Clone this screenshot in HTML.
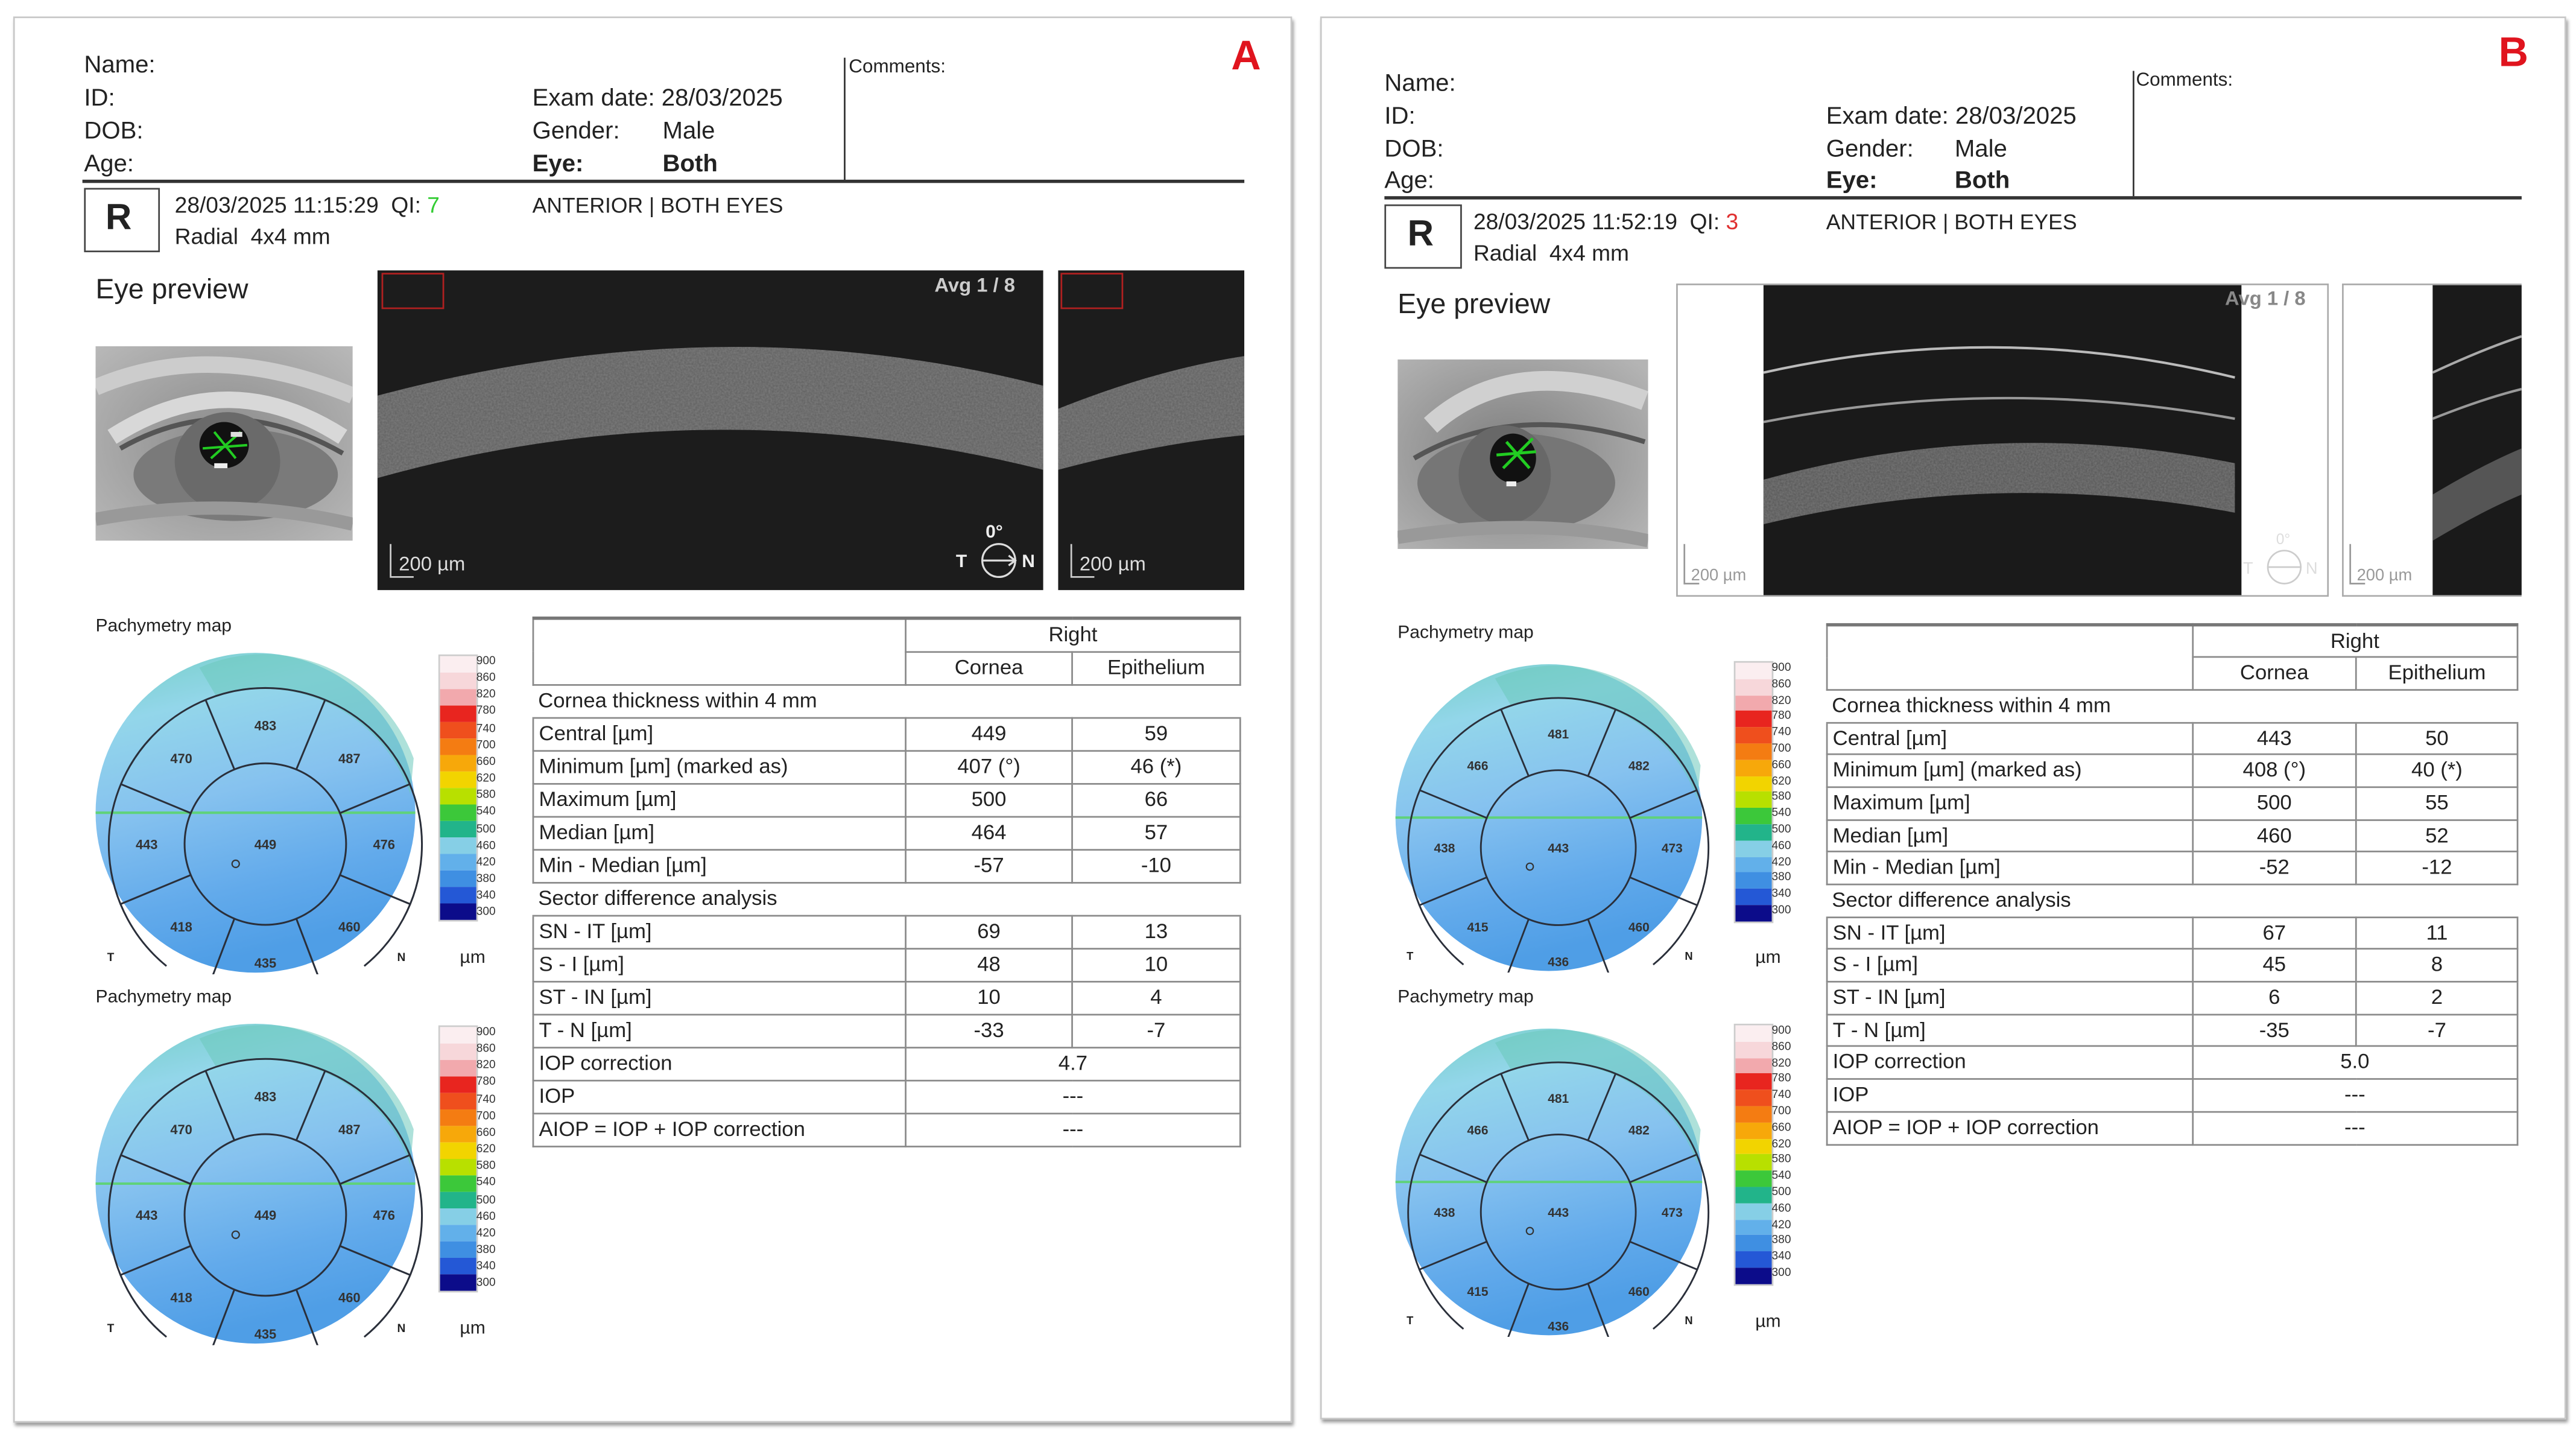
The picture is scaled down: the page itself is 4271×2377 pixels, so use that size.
<!DOCTYPE html>
<html><head><meta charset="utf-8">
<style>
html,body{margin:0;padding:0;background:#fff;}
body{width:4271px;height:2376px;overflow:hidden;position:relative;}
#root{position:absolute;left:0;top:0;width:1563px;height:870px;transform:scale(2.7326);transform-origin:0 0;font-family:"Liberation Sans",sans-serif;color:#222;}
.a{position:absolute;}
.t{position:absolute;white-space:nowrap;line-height:1;}
.h{font-size:14.7px;}
.panel{position:absolute;border:1px solid #c8c8c8;box-shadow:1px 2px 2px #999;background:#fff;}
table.tb{position:absolute;border-collapse:collapse;font-size:12.7px;color:#222;}
table.tb td{border:1px solid #8a8a8a;padding:0 0 0 3px;white-space:nowrap;line-height:1;}
table.tb td.c{text-align:center;padding:0;}
table.tb tr.s td{border-left:none;}
.bar div{height:10px;}
.sc{position:absolute;font-size:7px;line-height:1;color:#333;}
</style></head><body><div id="root">

<!-- PANEL A -->
<div class="panel" style="left:8px;top:10px;width:774px;height:851px;"></div>
<div class="t h" style="left:51px;top:33px;">Name:</div>
<div class="t h" style="left:51px;top:53px;">ID:</div>
<div class="t h" style="left:51px;top:73px;">DOB:</div>
<div class="t h" style="left:51px;top:93px;">Age:</div>
<div class="t h" style="left:323px;top:53px;">Exam date: 28/03/2025</div>
<div class="t h" style="left:323px;top:73px;">Gender:</div><div class="t h" style="left:402px;top:73px;">Male</div>
<div class="t h" style="left:323px;top:93px;font-weight:bold;">Eye:</div><div class="t h" style="left:402px;top:93px;font-weight:bold;">Both</div>
<div class="a" style="left:512px;top:35px;width:1px;height:75px;background:#333;"></div>
<div class="t" style="left:515px;top:36px;font-size:11.5px;">Comments:</div>
<div class="t" style="left:747px;top:22px;font-size:25px;font-weight:bold;color:#e0141e;">A</div>
<div class="a" style="left:50px;top:109px;width:705px;height:2px;background:#333;"></div>
<div class="a" style="left:51px;top:114px;width:44px;height:37px;border:1px solid #444;"></div>
<div class="t" style="left:64px;top:121px;font-size:22px;font-weight:bold;">R</div>
<div class="t" style="left:106px;top:118px;font-size:13.6px;">28/03/2025 11:15:29&nbsp; QI: <span style="color:#3c3">7</span></div>
<div class="t" style="left:106px;top:137px;font-size:13.6px;">Radial&nbsp; 4x4 mm</div>
<div class="t" style="left:323px;top:118px;font-size:13px;">ANTERIOR | BOTH EYES</div>
<div class="t" style="left:58px;top:167px;font-size:17px;">Eye preview</div>

<!-- eye A -->
<svg class="a" style="left:58px;top:210px;" width="156" height="118" viewBox="0 0 156 118">
<defs><radialGradient id="ea" cx="0.5" cy="0.5" r="0.7"><stop offset="0" stop-color="#8a8a8a"/><stop offset="1" stop-color="#b8b8b8"/></radialGradient></defs>
<rect width="156" height="118" fill="url(#ea)"/>
<path d="M0,25 Q70,-5 156,30" stroke="#ccc" stroke-width="10" fill="none"/>
<path d="M10,55 Q80,10 150,55" stroke="#d8d8d8" stroke-width="10" fill="none"/>
<path d="M15,62 Q80,25 150,65" stroke="#555" stroke-width="3" fill="none"/>
<ellipse cx="85" cy="78" rx="62" ry="28" fill="#7a7a7a"/>
<ellipse cx="80" cy="70" rx="32" ry="30" fill="#6a6a6a"/>
<ellipse cx="78" cy="60" rx="15" ry="14" fill="#111"/>
<path d="M65,62 L92,60 M72,52 L85,68 M70,68 L88,52" stroke="#2c2" stroke-width="1.5"/>
<rect x="72" y="71" width="8" height="3" fill="#eee"/><rect x="82" y="52" width="7" height="3" fill="#ddd"/>
<path d="M0,105 Q80,90 156,108" stroke="#999" stroke-width="8" fill="none"/>
</svg>

<!-- OCT A -->
<svg class="a" style="left:229px;top:164px;" width="404" height="194" viewBox="0 0 404 194">
<defs><filter id="nz"><feTurbulence type="fractalNoise" baseFrequency="0.9" numOctaves="2" seed="3"/><feColorMatrix values="0 0 0 0 0.5  0 0 0 0 0.5  0 0 0 0 0.5  0 0 0 0.35 0"/><feComposite in2="SourceGraphic" operator="in"/></filter></defs>
<rect width="404" height="194" fill="#1c1c1c"/>
<path d="M0,76 Q210,20 404,70 L404,121 Q200,70 0,126 Z" fill="#5e5e5e"/>
<path d="M0,76 Q210,20 404,70 L404,121 Q200,70 0,126 Z" fill="#fff" filter="url(#nz)"/>
<rect x="3" y="2" width="37" height="21" fill="none" stroke="#b02020" stroke-width="1"/>
<text x="338" y="13" font-size="12" fill="#ccc" font-family="Liberation Sans" font-weight="bold">Avg 1 / 8</text>
<path d="M8,166 V186 H22" stroke="#ccc" fill="none" stroke-width="1"/>
<text x="13" y="182" font-size="12" fill="#ddd" font-family="Liberation Sans">200 µm</text>
<text x="369" y="162" font-size="11" fill="#eee" font-family="Liberation Sans" font-weight="bold">0°</text>
<circle cx="377" cy="176" r="10" fill="none" stroke="#ddd" stroke-width="1.2"/>
<path d="M367,176 H387 M383,173 L387,176 L383,179" stroke="#ddd" fill="none" stroke-width="1.2"/>
<text x="351" y="180" font-size="11" fill="#eee" font-family="Liberation Sans" font-weight="bold">T</text>
<text x="391" y="180" font-size="11" fill="#eee" font-family="Liberation Sans" font-weight="bold">N</text>
</svg>
<svg class="a" style="left:642px;top:164px;" width="113" height="194" viewBox="0 0 113 194">
<rect width="113" height="194" fill="#1c1c1c"/>
<path d="M0,84 Q60,60 113,52 L113,100 Q60,105 0,121 Z" fill="#5e5e5e"/>
<path d="M0,84 Q60,60 113,52 L113,100 Q60,105 0,121 Z" fill="#fff" filter="url(#nz)"/>
<rect x="2" y="2" width="37" height="21" fill="none" stroke="#b02020" stroke-width="1"/>
<path d="M8,166 V186 H22" stroke="#ccc" fill="none" stroke-width="1"/>
<text x="13" y="182" font-size="12" fill="#ddd" font-family="Liberation Sans">200 µm</text>
</svg>

<!-- Maps A -->
<div class="t" style="left:58px;top:375px;font-size:11px;">Pachymetry map</div>
<div class="t" style="left:58px;top:600px;font-size:11px;">Pachymetry map</div>

<svg class="a" style="left:51px;top:387px;" width="220" height="210" viewBox="-110 -125 220 210">
<defs>
<linearGradient id="mg" x1="0" y1="0" x2="0.25" y2="1"><stop offset="0" stop-color="#74cfc4"/><stop offset="0.22" stop-color="#93d6ea"/><stop offset="0.5" stop-color="#86c2ef"/><stop offset="0.8" stop-color="#62aaeb"/><stop offset="1" stop-color="#4f9ee6"/></linearGradient>
<clipPath id="cl"><rect x="-110" y="-125" width="220" height="204"/></clipPath>
</defs>
<g clip-path="url(#cl)">
<circle cx="-6" cy="-19" r="97" fill="url(#mg)"/>
<path d="M-40,-107 A97 97 0 0 1 90,-52 L88,-30 A95 95 0 0 0 -30,-90 Z" fill="#6cc8bc" opacity="0.55"/>
<line x1="-103" y1="-19" x2="91" y2="-19" stroke="#5fd27a" stroke-width="1.5"/>
<circle r="49" fill="none" stroke="#2a2f3a" stroke-width="1.1"/>
<path d="M-60,74 A95 95 0 1 1 60,74" fill="none" stroke="#2a2f3a" stroke-width="1.1"/>
<g stroke="#2a2f3a" stroke-width="1.1">
<line x1="-18.8" y1="-45.3" x2="-36.4" y2="-87.8"/><line x1="18.8" y1="-45.3" x2="36.4" y2="-87.8"/>
<line x1="-45.3" y1="-18.8" x2="-87.8" y2="-36.4"/><line x1="45.3" y1="-18.8" x2="87.8" y2="-36.4"/>
<line x1="-45.3" y1="18.8" x2="-87.8" y2="36.4"/><line x1="45.3" y1="18.8" x2="87.8" y2="36.4"/>
<line x1="-18.8" y1="45.3" x2="-32" y2="80"/><line x1="18.8" y1="45.3" x2="32" y2="80"/>
</g>
<g font-family="Liberation Sans" font-size="8" font-weight="bold" fill="#333" text-anchor="middle">
<text x="0" y="-69">483</text><text x="-51" y="-49">470</text><text x="51" y="-49">487</text>
<text x="-72" y="3">443</text><text x="0" y="3">449</text><text x="72" y="3">476</text>
<text x="-51" y="53">418</text><text x="0" y="75">435</text><text x="51" y="53">460</text>
</g>
<circle cx="-18" cy="12" r="2.2" fill="none" stroke="#333" stroke-width="0.8"/>
</g>
<text x="-96" y="71" font-family="Liberation Sans" font-size="7" font-weight="bold" fill="#222">T</text>
<text x="80" y="71" font-family="Liberation Sans" font-size="7" font-weight="bold" fill="#222">N</text>
</svg>
<svg class="a" style="left:51px;top:612px;" width="220" height="210" viewBox="-110 -125 220 210">
<g clip-path="url(#cl)">
<circle cx="-6" cy="-19" r="97" fill="url(#mg)"/>
<path d="M-40,-107 A97 97 0 0 1 90,-52 L88,-30 A95 95 0 0 0 -30,-90 Z" fill="#6cc8bc" opacity="0.55"/>
<line x1="-103" y1="-19" x2="91" y2="-19" stroke="#5fd27a" stroke-width="1.5"/>
<circle r="49" fill="none" stroke="#2a2f3a" stroke-width="1.1"/>
<path d="M-60,74 A95 95 0 1 1 60,74" fill="none" stroke="#2a2f3a" stroke-width="1.1"/>
<g stroke="#2a2f3a" stroke-width="1.1">
<line x1="-18.8" y1="-45.3" x2="-36.4" y2="-87.8"/><line x1="18.8" y1="-45.3" x2="36.4" y2="-87.8"/>
<line x1="-45.3" y1="-18.8" x2="-87.8" y2="-36.4"/><line x1="45.3" y1="-18.8" x2="87.8" y2="-36.4"/>
<line x1="-45.3" y1="18.8" x2="-87.8" y2="36.4"/><line x1="45.3" y1="18.8" x2="87.8" y2="36.4"/>
<line x1="-18.8" y1="45.3" x2="-32" y2="80"/><line x1="18.8" y1="45.3" x2="32" y2="80"/>
</g>
<g font-family="Liberation Sans" font-size="8" font-weight="bold" fill="#333" text-anchor="middle">
<text x="0" y="-69">483</text><text x="-51" y="-49">470</text><text x="51" y="-49">487</text>
<text x="-72" y="3">443</text><text x="0" y="3">449</text><text x="72" y="3">476</text>
<text x="-51" y="53">418</text><text x="0" y="75">435</text><text x="51" y="53">460</text>
</g>
<circle cx="-18" cy="12" r="2.2" fill="none" stroke="#333" stroke-width="0.8"/>
</g>
<text x="-96" y="71" font-family="Liberation Sans" font-size="7" font-weight="bold" fill="#222">T</text>
<text x="80" y="71" font-family="Liberation Sans" font-size="7" font-weight="bold" fill="#222">N</text>
</svg>

<!-- color bars A -->
<div class="a bar" style="left:266px;top:397px;width:22px;border:1px solid #ccc;">
<div style="background:#fbeef0"></div><div style="background:#f7d7da"></div><div style="background:#f2a9ad"></div><div style="background:#e8251f"></div><div style="background:#ef4f1d"></div><div style="background:#f47c12"></div><div style="background:#f7a80a"></div><div style="background:#f2d400"></div><div style="background:#b8e000"></div><div style="background:#3cc83a"></div><div style="background:#22b48a"></div><div style="background:#86cfe6"></div><div style="background:#62b0ea"></div><div style="background:#3f8fe2"></div><div style="background:#2458d6"></div><div style="background:#0c0c8a"></div>
</div>
<div class="sc" style="left:289px;top:397px;line-height:10.15px;">900<br>860<br>820<br>780<br>740<br>700<br>660<br>620<br>580<br>540<br>500<br>460<br>420<br>380<br>340<br>300</div>
<div class="t" style="left:279px;top:576px;font-size:11px;">µm</div>
<div class="a bar" style="left:266px;top:622px;width:22px;border:1px solid #ccc;">
<div style="background:#fbeef0"></div><div style="background:#f7d7da"></div><div style="background:#f2a9ad"></div><div style="background:#e8251f"></div><div style="background:#ef4f1d"></div><div style="background:#f47c12"></div><div style="background:#f7a80a"></div><div style="background:#f2d400"></div><div style="background:#b8e000"></div><div style="background:#3cc83a"></div><div style="background:#22b48a"></div><div style="background:#86cfe6"></div><div style="background:#62b0ea"></div><div style="background:#3f8fe2"></div><div style="background:#2458d6"></div><div style="background:#0c0c8a"></div>
</div>
<div class="sc" style="left:289px;top:622px;line-height:10.15px;">900<br>860<br>820<br>780<br>740<br>700<br>660<br>620<br>580<br>540<br>500<br>460<br>420<br>380<br>340<br>300</div>
<div class="t" style="left:279px;top:801px;font-size:11px;">µm</div>

<!-- table A -->
<table class="tb" style="left:323px;top:374px;width:430px;border-top:2px solid #777;">
<colgroup><col style="width:226px"><col style="width:101px"><col style="width:102px"></colgroup>
<tr style="height:20px"><td rowspan="2"></td><td class="c" colspan="2">Right</td></tr>
<tr style="height:20px"><td class="c">Cornea</td><td class="c">Epithelium</td></tr>
<tr class="s" style="height:20px"><td colspan="3" style="border-right:none">Cornea thickness within 4 mm</td></tr>
<tr style="height:20px"><td>Central [µm]</td><td class="c">449</td><td class="c">59</td></tr>
<tr style="height:20px"><td>Minimum [µm] (marked as)</td><td class="c">407 (°)</td><td class="c">46 (*)</td></tr>
<tr style="height:20px"><td>Maximum [µm]</td><td class="c">500</td><td class="c">66</td></tr>
<tr style="height:20px"><td>Median [µm]</td><td class="c">464</td><td class="c">57</td></tr>
<tr style="height:20px"><td>Min - Median [µm]</td><td class="c">-57</td><td class="c">-10</td></tr>
<tr class="s" style="height:20px"><td colspan="3" style="border-right:none">Sector difference analysis</td></tr>
<tr style="height:20px"><td>SN - IT [µm]</td><td class="c">69</td><td class="c">13</td></tr>
<tr style="height:20px"><td>S - I [µm]</td><td class="c">48</td><td class="c">10</td></tr>
<tr style="height:20px"><td>ST - IN [µm]</td><td class="c">10</td><td class="c">4</td></tr>
<tr style="height:20px"><td>T - N [µm]</td><td class="c">-33</td><td class="c">-7</td></tr>
<tr style="height:20px"><td>IOP correction</td><td class="c" colspan="2">4.7</td></tr>
<tr style="height:20px"><td>IOP</td><td class="c" colspan="2">---</td></tr>
<tr style="height:20px"><td>AIOP = IOP + IOP correction</td><td class="c" colspan="2">---</td></tr>
</table>

<!-- PANEL B -->
<div class="panel" style="left:801px;top:10px;width:754px;height:849px;"></div>
<div class="t h" style="left:840px;top:44px;">Name:</div>
<div class="t h" style="left:840px;top:64px;">ID:</div>
<div class="t h" style="left:840px;top:84px;">DOB:</div>
<div class="t h" style="left:840px;top:103px;">Age:</div>
<div class="t h" style="left:1108px;top:64px;">Exam date: 28/03/2025</div>
<div class="t h" style="left:1108px;top:84px;">Gender:</div><div class="t h" style="left:1186px;top:84px;">Male</div>
<div class="t h" style="left:1108px;top:103px;font-weight:bold;">Eye:</div><div class="t h" style="left:1186px;top:103px;font-weight:bold;">Both</div>
<div class="a" style="left:1294px;top:43px;width:1px;height:76px;background:#333;"></div>
<div class="t" style="left:1296px;top:44px;font-size:11.5px;">Comments:</div>
<div class="t" style="left:1516px;top:20px;font-size:25px;font-weight:bold;color:#e0141e;">B</div>
<div class="a" style="left:840px;top:119px;width:690px;height:2px;background:#333;"></div>
<div class="a" style="left:840px;top:124px;width:45px;height:37px;border:1px solid #444;"></div>
<div class="t" style="left:854px;top:131px;font-size:22px;font-weight:bold;">R</div>
<div class="t" style="left:894px;top:128px;font-size:13.6px;">28/03/2025 11:52:19&nbsp; QI: <span style="color:#e03030">3</span></div>
<div class="t" style="left:894px;top:147px;font-size:13.6px;">Radial&nbsp; 4x4 mm</div>
<div class="t" style="left:1108px;top:128px;font-size:13px;">ANTERIOR | BOTH EYES</div>
<div class="t" style="left:848px;top:176px;font-size:17px;">Eye preview</div>

<!-- eye B -->
<svg class="a" style="left:848px;top:218px;" width="152" height="115" viewBox="0 0 152 115">
<defs><radialGradient id="eb" cx="0.45" cy="0.5" r="0.7"><stop offset="0" stop-color="#7e7e7e"/><stop offset="1" stop-color="#b4b4b4"/></radialGradient></defs>
<rect width="152" height="115" fill="url(#eb)"/>
<path d="M20,40 Q70,-5 150,25" stroke="#d0d0d0" stroke-width="12" fill="none"/>
<path d="M10,60 Q70,25 150,50" stroke="#555" stroke-width="3" fill="none"/>
<ellipse cx="72" cy="75" rx="60" ry="30" fill="#767676"/>
<ellipse cx="65" cy="70" rx="28" ry="30" fill="#686868"/>
<ellipse cx="70" cy="60" rx="14" ry="15" fill="#111"/>
<path d="M60,58 L84,56 M66,50 L80,66 M64,66 L82,48" stroke="#2c2" stroke-width="1.8"/>
<rect x="66" y="74" width="6" height="3" fill="#eee"/>
<path d="M0,108 Q80,95 152,110" stroke="#999" stroke-width="8" fill="none"/>
</svg>

<!-- OCT B -->
<svg class="a" style="left:1017px;top:172px;" width="396" height="190" viewBox="0 0 396 190">
<rect x="0.5" y="0.5" width="395" height="189" fill="#fff" stroke="#aaa"/>
<rect x="53" y="1" width="290" height="188" fill="#1a1a1a"/>
<path d="M53,54 Q196,22 339,57" stroke="#bbb" stroke-width="1.5" fill="none"/>
<path d="M53,84 Q196,56 339,82" stroke="#999" stroke-width="1.5" fill="none"/>
<path d="M53,119 Q195,80 339,109 L339,139 Q195,112 53,146 Z" fill="#555"/>
<path d="M53,119 Q195,80 339,109 L339,139 Q195,112 53,146 Z" fill="#fff" filter="url(#nz)"/>
<text x="333" y="13" font-size="12" fill="#888" font-family="Liberation Sans" font-weight="bold">Avg 1 / 8</text>
<path d="M5,158 V182 H14" stroke="#999" fill="none"/>
<text x="9" y="180" font-size="10" fill="#999" font-family="Liberation Sans">200 µm</text>
<circle cx="369" cy="172" r="10" fill="none" stroke="#ccc"/>
<path d="M359,172 H379" stroke="#ccc"/>
<text x="364" y="158" font-size="9" fill="#ddd" font-family="Liberation Sans">0°</text>
<text x="344" y="176" font-size="10" fill="#ddd" font-family="Liberation Sans">T</text>
<text x="382" y="176" font-size="10" fill="#ddd" font-family="Liberation Sans">N</text>
</svg>
<svg class="a" style="left:1421px;top:172px;" width="109" height="190" viewBox="0 0 109 190">
<rect x="0.5" y="0.5" width="108" height="189" fill="#fff" stroke="#aaa"/>
<rect x="55" y="1" width="54" height="188" fill="#1a1a1a"/>
<path d="M55,54 Q85,40 109,32" stroke="#aaa" stroke-width="1.5" fill="none"/>
<path d="M55,82 Q85,70 109,64" stroke="#999" stroke-width="1.5" fill="none"/>
<path d="M55,128 Q85,110 109,100 L109,128 Q85,138 55,156 Z" fill="#555"/>
<path d="M5,158 V182 H14" stroke="#999" fill="none"/>
<text x="9" y="180" font-size="10" fill="#999" font-family="Liberation Sans">200 µm</text>
</svg>

<!-- Maps B -->
<div class="t" style="left:848px;top:379px;font-size:11px;">Pachymetry map</div>
<div class="t" style="left:848px;top:600px;font-size:11px;">Pachymetry map</div>
<svg class="a" style="left:840px;top:394px;" width="211" height="202" viewBox="-110 -125 220 210">
<g clip-path="url(#cl)">
<circle cx="-6" cy="-19" r="97" fill="url(#mg)"/>
<path d="M-40,-107 A97 97 0 0 1 90,-52 L88,-30 A95 95 0 0 0 -30,-90 Z" fill="#6cc8bc" opacity="0.55"/>
<line x1="-103" y1="-19" x2="91" y2="-19" stroke="#5fd27a" stroke-width="1.5"/>
<circle r="49" fill="none" stroke="#2a2f3a" stroke-width="1.1"/>
<path d="M-60,74 A95 95 0 1 1 60,74" fill="none" stroke="#2a2f3a" stroke-width="1.1"/>
<g stroke="#2a2f3a" stroke-width="1.1">
<line x1="-18.8" y1="-45.3" x2="-36.4" y2="-87.8"/><line x1="18.8" y1="-45.3" x2="36.4" y2="-87.8"/>
<line x1="-45.3" y1="-18.8" x2="-87.8" y2="-36.4"/><line x1="45.3" y1="-18.8" x2="87.8" y2="-36.4"/>
<line x1="-45.3" y1="18.8" x2="-87.8" y2="36.4"/><line x1="45.3" y1="18.8" x2="87.8" y2="36.4"/>
<line x1="-18.8" y1="45.3" x2="-32" y2="80"/><line x1="18.8" y1="45.3" x2="32" y2="80"/>
</g>
<g font-family="Liberation Sans" font-size="8" font-weight="bold" fill="#333" text-anchor="middle">
<text x="0" y="-69">481</text><text x="-51" y="-49">466</text><text x="51" y="-49">482</text>
<text x="-72" y="3">438</text><text x="0" y="3">443</text><text x="72" y="3">473</text>
<text x="-51" y="53">415</text><text x="0" y="75">436</text><text x="51" y="53">460</text>
</g>
<circle cx="-18" cy="12" r="2.2" fill="none" stroke="#333" stroke-width="0.8"/>
</g>
<text x="-96" y="71" font-family="Liberation Sans" font-size="7" font-weight="bold" fill="#222">T</text>
<text x="80" y="71" font-family="Liberation Sans" font-size="7" font-weight="bold" fill="#222">N</text>
</svg>
<svg class="a" style="left:840px;top:615px;" width="211" height="202" viewBox="-110 -125 220 210">
<g clip-path="url(#cl)">
<circle cx="-6" cy="-19" r="97" fill="url(#mg)"/>
<path d="M-40,-107 A97 97 0 0 1 90,-52 L88,-30 A95 95 0 0 0 -30,-90 Z" fill="#6cc8bc" opacity="0.55"/>
<line x1="-103" y1="-19" x2="91" y2="-19" stroke="#5fd27a" stroke-width="1.5"/>
<circle r="49" fill="none" stroke="#2a2f3a" stroke-width="1.1"/>
<path d="M-60,74 A95 95 0 1 1 60,74" fill="none" stroke="#2a2f3a" stroke-width="1.1"/>
<g stroke="#2a2f3a" stroke-width="1.1">
<line x1="-18.8" y1="-45.3" x2="-36.4" y2="-87.8"/><line x1="18.8" y1="-45.3" x2="36.4" y2="-87.8"/>
<line x1="-45.3" y1="-18.8" x2="-87.8" y2="-36.4"/><line x1="45.3" y1="-18.8" x2="87.8" y2="-36.4"/>
<line x1="-45.3" y1="18.8" x2="-87.8" y2="36.4"/><line x1="45.3" y1="18.8" x2="87.8" y2="36.4"/>
<line x1="-18.8" y1="45.3" x2="-32" y2="80"/><line x1="18.8" y1="45.3" x2="32" y2="80"/>
</g>
<g font-family="Liberation Sans" font-size="8" font-weight="bold" fill="#333" text-anchor="middle">
<text x="0" y="-69">481</text><text x="-51" y="-49">466</text><text x="51" y="-49">482</text>
<text x="-72" y="3">438</text><text x="0" y="3">443</text><text x="72" y="3">473</text>
<text x="-51" y="53">415</text><text x="0" y="75">436</text><text x="51" y="53">460</text>
</g>
<circle cx="-18" cy="12" r="2.2" fill="none" stroke="#333" stroke-width="0.8"/>
</g>
<text x="-96" y="71" font-family="Liberation Sans" font-size="7" font-weight="bold" fill="#222">T</text>
<text x="80" y="71" font-family="Liberation Sans" font-size="7" font-weight="bold" fill="#222">N</text>
</svg>

<!-- color bars B -->
<div class="a bar" style="left:1052px;top:401px;width:22px;border:1px solid #ccc;">
<div style="background:#fbeef0;height:9.8px"></div><div style="background:#f7d7da;height:9.8px"></div><div style="background:#f2a9ad;height:9.8px"></div><div style="background:#e8251f;height:9.8px"></div><div style="background:#ef4f1d;height:9.8px"></div><div style="background:#f47c12;height:9.8px"></div><div style="background:#f7a80a;height:9.8px"></div><div style="background:#f2d400;height:9.8px"></div><div style="background:#b8e000;height:9.8px"></div><div style="background:#3cc83a;height:9.8px"></div><div style="background:#22b48a;height:9.8px"></div><div style="background:#86cfe6;height:9.8px"></div><div style="background:#62b0ea;height:9.8px"></div><div style="background:#3f8fe2;height:9.8px"></div><div style="background:#2458d6;height:9.8px"></div><div style="background:#0c0c8a;height:9.8px"></div>
</div>
<div class="sc" style="left:1075px;top:401px;line-height:9.8px;">900<br>860<br>820<br>780<br>740<br>700<br>660<br>620<br>580<br>540<br>500<br>460<br>420<br>380<br>340<br>300</div>
<div class="t" style="left:1065px;top:576px;font-size:11px;">µm</div>
<div class="a bar" style="left:1052px;top:621px;width:22px;border:1px solid #ccc;">
<div style="background:#fbeef0;height:9.8px"></div><div style="background:#f7d7da;height:9.8px"></div><div style="background:#f2a9ad;height:9.8px"></div><div style="background:#e8251f;height:9.8px"></div><div style="background:#ef4f1d;height:9.8px"></div><div style="background:#f47c12;height:9.8px"></div><div style="background:#f7a80a;height:9.8px"></div><div style="background:#f2d400;height:9.8px"></div><div style="background:#b8e000;height:9.8px"></div><div style="background:#3cc83a;height:9.8px"></div><div style="background:#22b48a;height:9.8px"></div><div style="background:#86cfe6;height:9.8px"></div><div style="background:#62b0ea;height:9.8px"></div><div style="background:#3f8fe2;height:9.8px"></div><div style="background:#2458d6;height:9.8px"></div><div style="background:#0c0c8a;height:9.8px"></div>
</div>
<div class="sc" style="left:1075px;top:621px;line-height:9.8px;">900<br>860<br>820<br>780<br>740<br>700<br>660<br>620<br>580<br>540<br>500<br>460<br>420<br>380<br>340<br>300</div>
<div class="t" style="left:1065px;top:797px;font-size:11px;">µm</div>

<!-- table B -->
<table class="tb" style="left:1108px;top:378px;width:420px;border-top:2px solid #777;">
<colgroup><col style="width:222px"><col style="width:100px"><col style="width:98px"></colgroup>
<tr style="height:19.7px"><td rowspan="2"></td><td class="c" colspan="2">Right</td></tr>
<tr style="height:19.7px"><td class="c">Cornea</td><td class="c">Epithelium</td></tr>
<tr class="s" style="height:19.7px"><td colspan="3" style="border-right:none">Cornea thickness within 4 mm</td></tr>
<tr style="height:19.7px"><td>Central [µm]</td><td class="c">443</td><td class="c">50</td></tr>
<tr style="height:19.7px"><td>Minimum [µm] (marked as)</td><td class="c">408 (°)</td><td class="c">40 (*)</td></tr>
<tr style="height:19.7px"><td>Maximum [µm]</td><td class="c">500</td><td class="c">55</td></tr>
<tr style="height:19.7px"><td>Median [µm]</td><td class="c">460</td><td class="c">52</td></tr>
<tr style="height:19.7px"><td>Min - Median [µm]</td><td class="c">-52</td><td class="c">-12</td></tr>
<tr class="s" style="height:19.7px"><td colspan="3" style="border-right:none">Sector difference analysis</td></tr>
<tr style="height:19.7px"><td>SN - IT [µm]</td><td class="c">67</td><td class="c">11</td></tr>
<tr style="height:19.7px"><td>S - I [µm]</td><td class="c">45</td><td class="c">8</td></tr>
<tr style="height:19.7px"><td>ST - IN [µm]</td><td class="c">6</td><td class="c">2</td></tr>
<tr style="height:19.7px"><td>T - N [µm]</td><td class="c">-35</td><td class="c">-7</td></tr>
<tr style="height:19.7px"><td>IOP correction</td><td class="c" colspan="2">5.0</td></tr>
<tr style="height:19.7px"><td>IOP</td><td class="c" colspan="2">---</td></tr>
<tr style="height:19.7px"><td>AIOP = IOP + IOP correction</td><td class="c" colspan="2">---</td></tr>
</table>

</div></body></html>
